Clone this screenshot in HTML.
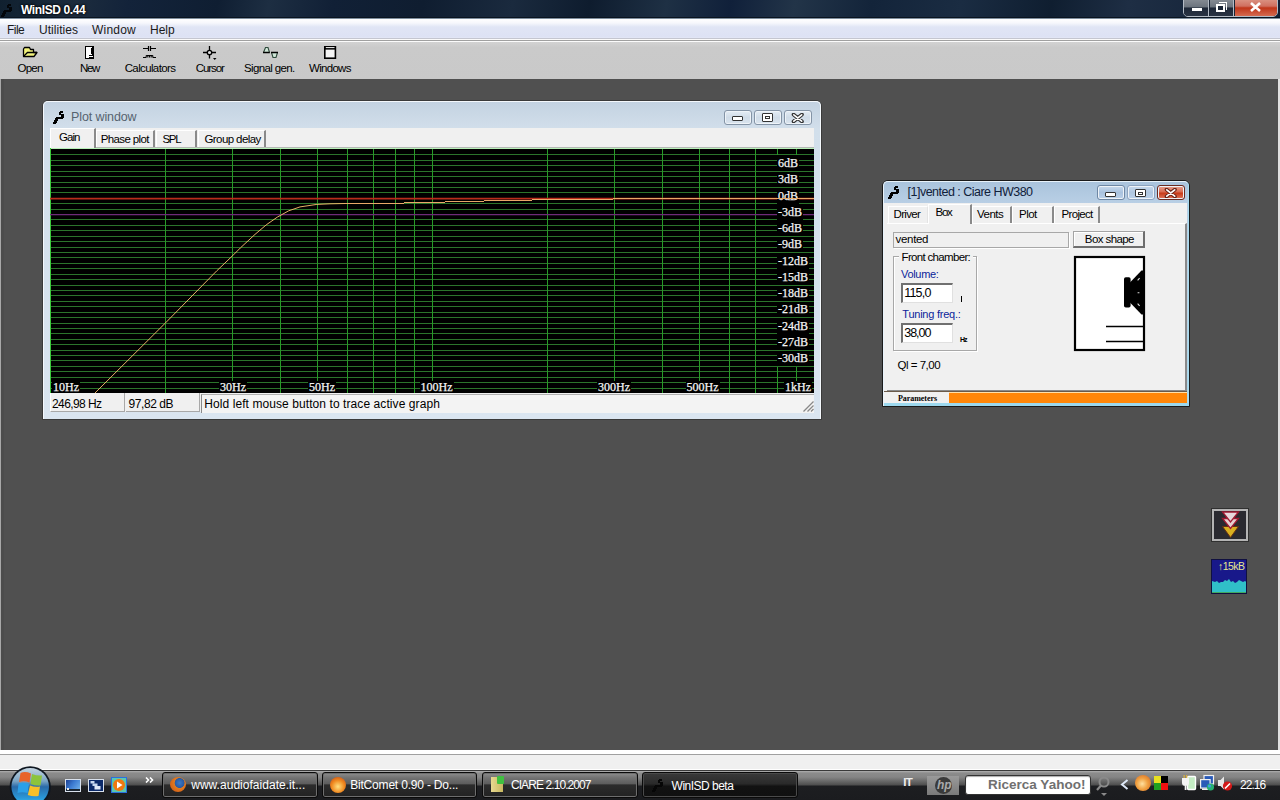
<!DOCTYPE html><html><head><meta charset="utf-8"><style>
*{box-sizing:border-box;margin:0;padding:0}
html,body{width:1280px;height:800px;overflow:hidden;background:#505050;font-family:"Liberation Sans",sans-serif;font-size:12px;color:#000}
.a{position:absolute}
.t{position:absolute;white-space:nowrap;line-height:1}
#titlebar{left:0;top:0;width:1280px;height:18px;box-shadow:inset 0 -1px 0 #0a1420;background:linear-gradient(100deg,#10202f 0%,#1c2c3e 6%,#13233a 10%,#0f1e32 17%,#1d2e42 21%,#112036 26%,#0f1d30 33%,#1a2a3e 40%,#0e1c2e 46%,#1e3044 52%,#10203a 57%,#223448 62%,#13243a 68%,#1a2c42 75%,#0f1e30 82%,#1e2e44 88%,#111f34 100%);}
#menubar{left:0;top:19px;width:1280px;height:19px;background:linear-gradient(180deg,#ffffff 0px,#f6f7fc 4px,#e0e5f5 8px,#dde2f4 18px,#e4e8f6 19px)}
#toolbar{left:0;top:42px;width:1280px;height:37px;background:linear-gradient(180deg,#d2d2d2 0%,#cacaca 15%,#c9c9c9 100%)}
#mdi{left:0;top:79px;width:1280px;height:671px;background:#505050;border-left:1px solid #a8a8a8;border-right:2px solid #e0e0e0;box-shadow:inset 3px 0 0 #4c4c4c}
#status{left:0;top:750px;width:1280px;height:20px;background:#f0f0f0;border-top:4px solid #fff;border-bottom:1px solid #fff}
#status:after{content:"";position:absolute;left:0;top:0;width:1280px;height:1px;background:#a0a0a0}
#taskbar{left:0;top:770px;width:1280px;height:30px;background:linear-gradient(180deg,#b0b0b0 0px,#8c8c8c 2px,#868686 6px,#4e4e4e 14px,#1d1e21 15px,#1b1c1f 100%);border-top:1px solid #3a3a3a}
.pl{position:absolute;font-family:"Liberation Serif",serif;font-size:12px;line-height:12px;height:14px;color:#f4f4f4;background:#000;white-space:nowrap;padding-right:1px;-webkit-text-stroke:0.25px #f4f4f4}
.win{position:absolute;border-radius:6px 6px 0 0;border:1px solid #3a3a3a}
.tab{position:absolute;background:#f0f0f0;border-top:1px solid #fff;border-left:1px solid #fff;border-right:2px solid #8a8a8a}
.cbtn{position:absolute;height:15px;width:28px;border:1px solid #8494a6;border-radius:3px;background:linear-gradient(180deg,#e4ecf4 0%,#d0dce8 50%,#dae4ee 100%);box-shadow:inset 0 0 0 1px #eef3f8}
.sp{position:absolute;height:19px;background:#f0f0f0;border-right:1px solid #a8a8a8;border-bottom:1px solid #a8a8a8}
.tbtn{position:absolute;top:772px;height:26px;border:1px solid #0a0a0a;border-radius:3px;box-shadow:inset 0 0 0 1px #6e6e6e;background:linear-gradient(180deg,#8e8e8e 0%,#727272 20%,#5e5e5e 44%,#2c2c2c 50%,#222 100%)}
</style></head><body>
<div id="titlebar" class="a"></div>
<svg class="a" style="left:1px;top:4px" width="11" height="13" viewBox="0 0 11 13" shape-rendering="crispEdges"><path d="M7 0h3v2h-3zM6 1h2v3h-2zM8 3h3v4h-3zM3 6h7v2h-7zM2 7h3v3h-3zM1 9h3v3h-3zM0 11h3v2h-3z" fill="#03060a"/></svg>
<div class="t" style="left:21.00px;top:3.84px;font-size:12px;font-weight:bold;letter-spacing:-0.39px;color:#fff;text-shadow:0 0 3px #000,0 0 2px #000">WinISD 0.44</div>
<div class="a" style="left:1183px;top:-3px;width:95px;height:20px;border:1px solid #b4bcc6;border-radius:0 0 5px 5px;background:#1a2535;overflow:hidden"><div class="a" style="left:0;top:0;width:25px;height:18px;background:linear-gradient(180deg,#8a9098 0%,#6c747e 50%,#1e2838 55%,#2a3444 100%);border-right:1px solid #b4bcc6"></div><div class="a" style="left:26px;top:0;width:24px;height:18px;background:linear-gradient(180deg,#8a9098 0%,#6c747e 50%,#1e2838 55%,#2a3444 100%);border-right:1px solid #b4bcc6"></div><div class="a" style="left:51px;top:0;width:43px;height:18px;background:linear-gradient(180deg,#dc9a8a 0%,#d07060 45%,#c0361a 55%,#d46a50 100%)"></div></div>
<div class="a" style="left:1192px;top:8px;width:10px;height:3px;background:#fff"></div>
<div class="a" style="left:1219px;top:1.5px;width:8px;height:8px;border:1.5px solid #fff;border-left:none;border-bottom:none"></div>
<div class="a" style="left:1216px;top:4px;width:9px;height:8px;border:2.5px solid #fff;background:#1a2535"></div>
<svg class="a" style="left:1249px;top:2px" width="13" height="10" viewBox="0 0 13 10"><path d="M2 1L11 9M11 1L2 9" stroke="#fff" stroke-width="2.6"/></svg>
<div id="menubar" class="a"></div>
<div class="a" style="left:0;top:18px;width:1280px;height:1px;background:#7e8e9e"></div>
<div class="a" style="left:0;top:38px;width:1280px;height:1px;background:#c4c6d0"></div>
<div class="a" style="left:0;top:39px;width:1280px;height:1px;background:#fafafa"></div>
<div class="a" style="left:0;top:40px;width:1280px;height:1px;background:#a0a0a0"></div>
<div class="a" style="left:0;top:41px;width:1280px;height:1px;background:#fbfbfb"></div>
<div class="t" style="left:7.00px;top:23.64px;font-size:12px;letter-spacing:-0.55px;color:#1a1a1a;">File</div>
<div class="t" style="left:39.00px;top:23.64px;font-size:12px;letter-spacing:0.04px;color:#1a1a1a;">Utilities</div>
<div class="t" style="left:92.00px;top:23.64px;font-size:12px;letter-spacing:0.20px;color:#1a1a1a;">Window</div>
<div class="t" style="left:150.00px;top:23.64px;font-size:12px;color:#1a1a1a;">Help</div>
<div id="toolbar" class="a"></div>
<div class="t" style="left:17.50px;top:63.07px;font-size:11.5px;letter-spacing:-0.75px;color:#000;">Open</div>
<div class="t" style="left:80.00px;top:63.07px;font-size:11.5px;letter-spacing:-1.35px;color:#000;">New</div>
<div class="t" style="left:124.70px;top:63.07px;font-size:11.5px;letter-spacing:-0.63px;color:#000;">Calculators</div>
<div class="t" style="left:195.70px;top:63.07px;font-size:11.5px;letter-spacing:-1.08px;color:#000;">Cursor</div>
<div class="t" style="left:244.00px;top:63.07px;font-size:11.5px;letter-spacing:-0.63px;color:#000;">Signal gen.</div>
<div class="t" style="left:309.00px;top:63.07px;font-size:11.5px;letter-spacing:-0.70px;color:#000;">Windows</div>
<svg class="a" style="left:0;top:40px" width="360" height="40" viewBox="0 40 360 40"><path d="M23.5 49 V56.5 H34 L37 52.5 H33.5 V49.5 H30.5 L29.5 47.5 H24.5 Z" fill="#f2f27a" stroke="#000" stroke-width="1.3" stroke-linejoin="round"/><path d="M37 52.5 H27.5 L24 56" fill="#e8f088" stroke="#000" stroke-width="1.3"/><g shape-rendering="crispEdges"><rect x="85" y="46" width="9" height="13" fill="#000"/><rect x="86" y="47" width="6" height="11" fill="#fff"/><rect x="91" y="48" width="2" height="6" fill="#000"/><rect x="89" y="55" width="4" height="1" fill="#000"/><rect x="89" y="56" width="4" height="1" fill="#fff"/><rect x="89" y="57" width="4" height="1" fill="#000"/></g><path d="M143 48.5H148.5M150.5 48.5H156M148.5 46V51M150.5 46V51" stroke="#000" stroke-width="1.2" fill="none"/><path d="M143 57.5H146.2M152.8 57.5H156M146.2 57.5V55.5M147.8 57.5V55.5M149.5 57.5V55.5M151.2 57.5V55.5M152.8 57.5V55.5M146.2 55.5H152.8" stroke="#000" stroke-width="1.1" fill="none"/><path d="M209.5 46V58.5M203 52.5H216" stroke="#000" stroke-width="1.3"/><circle cx="209.5" cy="52.5" r="2.2" fill="#ddd" stroke="#000" stroke-width="1.3"/><path d="M213 58H216.5L214.75 60Z" fill="#000"/><path d="M263.5 52.5 L265.5 47.5 H268 L269.5 52.5" fill="#cfe6d8" stroke="#2f4a3c" stroke-width="1.1"/><path d="M271.5 52.5 L273 57.5 H276 L277.5 52.5" fill="#cfe6d8" stroke="#2f4a3c" stroke-width="1.1"/><path d="M263 52.5H269.8M271 52.5H278" stroke="#000" stroke-width="1.3"/><rect x="324.8" y="46.8" width="10.6" height="11.4" fill="#f4f4f4" stroke="#000" stroke-width="1.6"/><path d="M324.8 48.8H335.4" stroke="#000" stroke-width="1.6"/><path d="M326 47.6H334.4" stroke="#fff" stroke-width="0.9"/></svg>
<div id="mdi" class="a"></div>
<div class="win" style="left:42px;top:100px;width:780px;height:320px;background:linear-gradient(180deg,#c3d2e1 0%,#d2dfeb 9%,#dae5f0 100%)"></div>
<div class="a" style="left:43px;top:101px;width:778px;height:318px;border:1px solid #f4f8fc;border-radius:5px 5px 0 0;border-bottom:none"></div>
<div class="a" style="left:50px;top:128px;width:764px;height:284px;background:#f0f0f0"></div>
<svg class="a" style="left:53px;top:111px" width="11" height="13" viewBox="0 0 11 13" shape-rendering="crispEdges"><path d="M7 0h3v2h-3zM6 1h2v3h-2zM8 3h3v4h-3zM3 6h7v2h-7zM2 7h3v3h-3zM1 9h3v3h-3zM0 11h3v2h-3z" fill="#000"/></svg>
<div class="t" style="left:71.00px;top:110.92px;font-size:12.5px;letter-spacing:-0.11px;color:#56636f;">Plot window</div>
<div class="cbtn" style="left:724px;top:110px"></div>
<div class="cbtn" style="left:754px;top:110px"></div>
<div class="cbtn" style="left:784px;top:110px"></div>
<div class="a" style="left:732px;top:116px;width:11px;height:5px;border:1.5px solid #333;background:#fff;border-radius:1px"></div>
<div class="a" style="left:762px;top:113px;width:11px;height:9px;border:1.5px solid #333;background:#fff;border-radius:1px"></div>
<div class="a" style="left:765px;top:116px;width:5px;height:3px;border:1px solid #333"></div>
<svg class="a" style="left:791px;top:113px" width="14" height="10" viewBox="0 0 14 10"><path d="M2.5 1.5L11 8.5M11 1.5L2.5 8.5" stroke="#333" stroke-width="3.6" stroke-linecap="round"/><path d="M2.8 1.8L10.7 8.2M10.7 1.8L2.8 8.2" stroke="#fff" stroke-width="1.6" stroke-linecap="round"/></svg>
<div class="a" style="left:50px;top:147px;width:764px;height:1px;background:#b4b8b4"></div>
<div class="tab" style="left:96px;top:130px;width:59px;height:17px"></div>
<div class="t" style="left:100.80px;top:134.47px;font-size:11.5px;letter-spacing:-0.63px;color:#000;">Phase plot</div>
<div class="tab" style="left:156px;top:130px;width:41px;height:17px"></div>
<div class="t" style="left:162.40px;top:134.47px;font-size:11.5px;letter-spacing:-1.27px;color:#000;">SPL</div>
<div class="tab" style="left:198px;top:130px;width:68px;height:17px"></div>
<div class="t" style="left:204.50px;top:134.47px;font-size:11.5px;letter-spacing:-0.59px;color:#000;">Group delay</div>
<div class="tab" style="left:50px;top:128px;width:46px;height:20px;border-bottom:none"></div>
<div class="t" style="left:59.00px;top:132.27px;font-size:11.5px;letter-spacing:-0.97px;color:#000;">Gain</div>
<svg style="position:absolute;left:50px;top:148px" width="764" height="245" viewBox="50 148 764 245" shape-rendering="crispEdges">
<rect x="50" y="148" width="764" height="245" fill="#000"/>
<path d="M50 154.5H814M50 160.5H814M50 165.5H814M50 171.5H814M50 176.5H814M50 182.5H814M50 187.5H814M50 192.5H814M50 198.5H814M50 203.5H814M50 209.5H814M50 214.5H814M50 219.5H814M50 225.5H814M50 230.5H814M50 236.5H814M50 241.5H814M50 247.5H814M50 252.5H814M50 257.5H814M50 263.5H814M50 268.5H814M50 274.5H814M50 279.5H814M50 285.5H814M50 290.5H814M50 295.5H814M50 301.5H814M50 306.5H814M50 312.5H814M50 317.5H814M50 323.5H814M50 328.5H814M50 333.5H814M50 339.5H814M50 344.5H814M50 350.5H814M50 355.5H814M50 360.5H814M50 366.5H814M50 371.5H814M50 377.5H814M50 382.5H814M50 388.5H814" stroke="#2b742b" stroke-width="1" fill="none"/>
<path d="M165.5 148V393M232.5 148V393M280.5 148V393M317.5 148V393M347.5 148V393M373.5 148V393M395.5 148V393M414.5 148V393M432.5 148V393M547.5 148V393M614.5 148V393M662.5 148V393M699.5 148V393M729.5 148V393M755.5 148V393M777.5 148V155M777.5 367V393M796.5 148V155M796.5 367V393" stroke="#289a28" stroke-width="1" fill="none"/>
<path d="M50 148.5H814" stroke="#b8f0b8" stroke-width="1" fill="none"/>
<path d="M50.5 148V393" stroke="#3cc83c" stroke-width="1" fill="none"/>
<path d="M50 214.6H814" stroke="#6e2a78" stroke-width="1.3" shape-rendering="auto"/>
<path d="M50 198.6H814" stroke="#b82c1c" stroke-width="1.7" shape-rendering="auto"/>
</svg>
<div class="pl" style="left:777px;top:157px;padding-left:1px">6dB</div>
<div class="pl" style="left:777px;top:173px;padding-left:1px">3dB</div>
<div class="pl" style="left:777px;top:190px;padding-left:1px">0dB</div>
<div class="pl" style="left:777px;top:206px;padding-left:1px">-3dB</div>
<div class="pl" style="left:777px;top:222px;padding-left:1px">-6dB</div>
<div class="pl" style="left:777px;top:238px;padding-left:1px">-9dB</div>
<div class="pl" style="left:777px;top:255px;padding-left:1px">-12dB</div>
<div class="pl" style="left:777px;top:271px;padding-left:1px">-15dB</div>
<div class="pl" style="left:777px;top:287px;padding-left:1px">-18dB</div>
<div class="pl" style="left:777px;top:303px;padding-left:1px">-21dB</div>
<div class="pl" style="left:777px;top:320px;padding-left:1px">-24dB</div>
<div class="pl" style="left:777px;top:336px;padding-left:1px">-27dB</div>
<div class="pl" style="left:777px;top:352px;padding-left:1px">-30dB</div>
<div class="pl" style="left:52px;top:381px;padding-left:1px;height:12px;overflow:hidden">10Hz</div>
<div class="pl" style="left:219px;top:381px;padding-left:1px;height:12px;overflow:hidden">30Hz</div>
<div class="pl" style="left:308px;top:381px;padding-left:1px;height:12px;overflow:hidden">50Hz</div>
<div class="pl" style="left:419.5px;top:381px;padding-left:1px;height:12px;overflow:hidden">100Hz</div>
<div class="pl" style="left:597px;top:381px;padding-left:1px;height:12px;overflow:hidden">300Hz</div>
<div class="pl" style="left:685.5px;top:381px;padding-left:1px;height:12px;overflow:hidden">500Hz</div>
<div class="pl" style="left:784px;top:381px;padding-left:1px;height:12px;overflow:hidden">1kHz</div>
<svg style="position:absolute;left:50px;top:148px" width="764" height="245" viewBox="50 148 764 245">
<path d="M95.0 393.0 L165.6 322.8 L216.8 270.8 L232.5 255.8 L240.4 247.9 L255.0 234.4 L266.2 224.9 L277.5 217.0 L288.7 210.8 L300.0 206.9 L316.9 204.4 L330.0 203.8 L345.0 203.5" stroke="#f2b86c" stroke-width="0.95" fill="none"/>
<path d="M345 203.5H404M404 202.5H445M445 201.5H484M484 200.5H532M532 199.5H613M613 198.5H814" stroke="#e8a868" stroke-width="1" fill="none" shape-rendering="crispEdges"/>
</svg>
<div class="a" style="left:50px;top:393px;width:764px;height:19px;background:#f0f0f0"></div>
<div class="sp" style="left:50px;top:393px;width:75px;border-left:1px solid #fff"></div>
<div class="t" style="left:52.00px;top:397.84px;font-size:12px;letter-spacing:-0.59px;color:#000;">246,98 Hz</div>
<div class="sp" style="left:126px;top:393px;width:74px"></div>
<div class="t" style="left:128.50px;top:397.84px;font-size:12px;letter-spacing:-0.43px;color:#000;">97,82 dB</div>
<div class="sp" style="left:201px;top:394px;width:613px;border-left:1px solid #8a8a8a;border-top:1px solid #b0b0b0;border-right:none;border-bottom:none;background:#f3f3f3"></div>
<div class="t" style="left:204.30px;top:397.84px;font-size:12px;letter-spacing:0.08px;color:#000;">Hold left mouse button to trace active graph</div>
<svg class="a" style="left:802px;top:400px" width="12" height="12" viewBox="0 0 12 12"><path d="M11.5 1.5L1.5 11.5M11.5 5.5L5.5 11.5M11.5 9L9 11.5" stroke="#888" stroke-width="1.3"/></svg>
<div class="win" style="left:882px;top:180px;width:308px;height:227px;background:linear-gradient(180deg,#a9c3dc 0%,#b9cfe5 10%,#bcd4e8 60%,#a6d8ee 100%);border-color:#1a1a1a"></div>
<div class="a" style="left:883px;top:181px;width:306px;height:225px;border:1px solid #e8f2fa;border-radius:5px 5px 0 0;border-bottom:none;border-right-color:#a8dcf0"></div>
<div class="a" style="left:884px;top:203px;width:303px;height:200px;background:#f0f0f0"></div>
<svg class="a" style="left:888px;top:186px" width="11" height="13" viewBox="0 0 11 13" shape-rendering="crispEdges"><path d="M7 0h3v2h-3zM6 1h2v3h-2zM8 3h3v4h-3zM3 6h7v2h-7zM2 7h3v3h-3zM1 9h3v3h-3zM0 11h3v2h-3z" fill="#000"/></svg>
<div class="t" style="left:907.60px;top:186.12px;font-size:12.5px;letter-spacing:-0.52px;color:#10203a;">[1]vented : Ciare HW380</div>
<div class="cbtn" style="left:1097px;top:185px;border-color:#6e87a4;background:linear-gradient(180deg,#c8daee 0%,#a9c2de 50%,#bcd2ea 100%)"></div>
<div class="cbtn" style="left:1127px;top:185px;border-color:#8ea4bf;background:linear-gradient(180deg,#c8daee 0%,#b0c7e0 50%,#bcd2ea 100%)"></div>
<div class="cbtn" style="left:1157px;top:185px;width:28px;border-color:#6a2a20;background:linear-gradient(180deg,#e9a493 0%,#d86a50 45%,#c83a18 55%,#e07a60 100%)"></div>
<div class="a" style="left:1105px;top:192px;width:11px;height:5px;border:1.5px solid #333;background:#fff;border-radius:1px"></div>
<div class="a" style="left:1135px;top:189px;width:11px;height:8px;border:1.5px solid #333;background:#fff;border-radius:1px"></div>
<div class="a" style="left:1138px;top:191.5px;width:5px;height:3px;border:1px solid #333"></div>
<svg class="a" style="left:1164px;top:187.5px" width="14" height="10" viewBox="0 0 14 10"><path d="M2.5 1.5L11 8.5M11 1.5L2.5 8.5" stroke="#6a2418" stroke-width="3.6" stroke-linecap="round"/><path d="M2.8 1.8L10.7 8.2M10.7 1.8L2.8 8.2" stroke="#fff" stroke-width="1.7" stroke-linecap="round"/></svg>
<div class="a" style="left:887px;top:223px;width:300px;height:168px;border-top:1px solid #fff;border-right:2px solid #8a8a8a;border-bottom:1px solid #8a8a8a"></div>
<div class="tab" style="left:888px;top:206px;width:40px;height:17px;border-right:1px solid #e4e4e4"></div>
<div class="t" style="left:893.50px;top:209.07px;font-size:11.5px;letter-spacing:-0.67px;color:#000;">Driver</div>
<div class="tab" style="left:972px;top:206px;width:40px;height:17px"></div>
<div class="t" style="left:977.00px;top:209.07px;font-size:11.5px;letter-spacing:-0.51px;color:#000;">Vents</div>
<div class="tab" style="left:1012px;top:206px;width:42px;height:17px"></div>
<div class="t" style="left:1019.00px;top:209.07px;font-size:11.5px;letter-spacing:-0.54px;color:#000;">Plot</div>
<div class="tab" style="left:1054px;top:206px;width:46px;height:17px"></div>
<div class="t" style="left:1061.60px;top:209.07px;font-size:11.5px;letter-spacing:-0.70px;color:#000;">Project</div>
<div class="tab" style="left:928px;top:204px;width:44px;height:20px;border-bottom:none"></div>
<div class="t" style="left:935.60px;top:206.87px;font-size:11.5px;letter-spacing:-1.28px;color:#000;">Box</div>
<div class="a" style="left:893px;top:231.5px;width:176px;height:16px;background:#f0f0f0;border:1px solid #a8a8a8;box-shadow:1px 1px 0 #fff"></div>
<div class="t" style="left:895.60px;top:234.07px;font-size:11.5px;letter-spacing:-0.33px;color:#000;">vented</div>
<div class="a" style="left:1073px;top:231px;width:72px;height:17px;background:#f0f0f0;border:1px solid #a4a4a4;border-right:2px solid #6e6e6e;border-bottom:2px solid #6e6e6e;box-shadow:inset 1px 1px 0 #fff"></div>
<div class="t" style="left:1084.80px;top:234.27px;font-size:11.5px;letter-spacing:-0.58px;color:#000;">Box shape</div>
<div class="a" style="left:893px;top:256px;width:84px;height:95px;border:1px solid #a8a8a8;box-shadow:inset 1px 1px 0 #fff,1px 1px 0 #fff"></div>
<div class="a" style="left:899px;top:252px;width:74px;height:10px;background:#f0f0f0"></div>
<div class="t" style="left:901.60px;top:252.17px;font-size:11.5px;letter-spacing:-0.68px;color:#000;">Front chamber:</div>
<div class="t" style="left:901.00px;top:268.69px;font-size:11px;letter-spacing:-0.31px;color:#0c249a;">Volume:</div>
<div class="a" style="left:901px;top:283px;width:52px;height:20px;background:#fff;border:2px solid #707070;border-right:1px solid #e0e0e0;border-bottom:1px solid #e0e0e0"></div>
<div class="t" style="left:904.20px;top:286.72px;font-size:12.5px;letter-spacing:-0.78px;color:#000;">115,0</div>
<div class="a" style="left:960.5px;top:296px;width:1.4px;height:6px;background:#000"></div>
<div class="t" style="left:902.30px;top:308.89px;font-size:11px;letter-spacing:-0.23px;color:#0c249a;">Tuning freq.:</div>
<div class="a" style="left:901px;top:323px;width:52px;height:20px;background:#fff;border:2px solid #707070;border-right:1px solid #e0e0e0;border-bottom:1px solid #e0e0e0"></div>
<div class="t" style="left:904.20px;top:326.62px;font-size:12.5px;letter-spacing:-1.01px;color:#000;">38,00</div>
<div class="t" style="left:960.00px;top:335.57px;font-size:7px;font-weight:bold;letter-spacing:-1.06px;color:#000;">Hz</div>
<div class="t" style="left:897.50px;top:359.97px;font-size:11.5px;letter-spacing:-0.49px;color:#000;">Ql = 7,00</div>
<svg class="a" style="left:1073px;top:255px" width="74" height="97" viewBox="0 0 74 97"><rect x="2" y="2" width="69" height="93" fill="#fff" stroke="#000" stroke-width="2.2"/><path d="M33 71.5H71M33 86.5H71" stroke="#000" stroke-width="1.6"/><rect x="51" y="22.2" width="6.6" height="30.4" rx="1.8" fill="#000"/><path d="M56 28.5 L68.5 15.5 H71 V59.5 H68.5 L56 46.5Z" fill="#000"/><path d="M64.6 25.4L66.6 23.2M64.6 37.8H66.4M64.6 48.6L66.6 50.8" stroke="#ddd" stroke-width="1.1"/></svg>
<div class="a" style="left:884px;top:391px;width:303px;height:12px;background:#f0f0f0;border-top:1px solid #6a5a4a"></div>
<div class="a" style="left:949px;top:392px;width:238px;height:11px;background:#ff8608;border-top:1px solid #ffe0a8"></div>
<div class="t" style="left:898.00px;top:394.80px;font-size:8px;font-family:'Liberation Serif',sans-serif;font-weight:bold;letter-spacing:-0.05px;color:#000;">Parameters</div>
<div class="a" style="left:884px;top:403px;width:305px;height:3px;background:#9cd8ee"></div>
<div class="a" style="left:1211px;top:508px;width:38px;height:34px;border:1px solid #303030;box-shadow:inset 0 0 0 2px #b4b4b4;background:#2a2a30"></div>
<svg class="a" style="left:1208px;top:505px" width="44" height="40" viewBox="1208 505 44 40"><path d="M1222.5 526.5 L1238.5 526.5 L1230.5 537.5 Z" fill="#d8b020" stroke="#6a3010" stroke-width="1"/><path d="M1222.5 518.5 L1238.5 518.5 L1230.5 528.5 Z" fill="#e4d0d0" stroke="#a01830" stroke-width="1.3"/><path d="M1222.5 512 L1238.5 512 L1230.5 522 Z" fill="#e8d8dc" stroke="#a01830" stroke-width="1.3"/></svg>
<div class="a" style="left:1211px;top:559px;width:36px;height:35px;background:#18188a;border:1px solid #101040;overflow:hidden"><svg class="a" style="left:0;top:0" width="36" height="35" viewBox="0 0 36 35"><path d="M0 21L3 22L5 21L7 23L9 22L11 22L13 20L15 21L17 19L19 22L21 21L23 23L25 22L27 20L29 21L31 22L33 21L36 23V35H0Z" fill="#30c0c8"/><path d="M0 32H36V35H0Z" fill="#40a860"/></svg></div>
<div class="t" style="left:1218.00px;top:561.11px;font-size:10.5px;letter-spacing:-0.54px;color:#e8e890;">↑15kB</div>
<div id="status" class="a"></div>
<div id="taskbar" class="a"></div>
<div class="tbtn" style="left:162px;width:156px"></div>
<div class="tbtn" style="left:322px;width:155px"></div>
<div class="tbtn" style="left:482px;width:156px"></div>
<div class="tbtn" style="left:642px;width:156px;background:linear-gradient(180deg,#3a3a3a 0%,#2a2a2a 45%,#121212 55%,#101010 100%);box-shadow:inset 0 0 0 1px #4a4a4a"></div>
<div class="t" style="left:191.20px;top:778.84px;font-size:12px;letter-spacing:0.03px;color:#fff;">www.audiofaidate.it...</div>
<div class="t" style="left:350.20px;top:778.84px;font-size:12px;letter-spacing:-0.19px;color:#fff;">BitComet 0.90 - Do...</div>
<div class="t" style="left:510.90px;top:778.84px;font-size:12px;letter-spacing:-0.91px;color:#fff;">CIARE 2.10.2007</div>
<div class="t" style="left:671.60px;top:779.84px;font-size:12px;letter-spacing:-0.51px;color:#fff;">WinISD beta</div>
<div class="t" style="left:1240.00px;top:778.94px;font-size:12px;letter-spacing:-0.96px;color:#fff;">22.16</div>
<div class="t" style="left:903.20px;top:776.87px;font-size:11.5px;font-weight:bold;letter-spacing:-0.70px;color:#eee;transform:scaleY(1.0)">IT</div>
<svg class="a" style="left:8px;top:764px" width="46" height="46" viewBox="8 764 46 46"><defs><linearGradient id="og" x1="0" y1="0" x2="0" y2="1"><stop offset="0" stop-color="#c4d4e0"/><stop offset="0.35" stop-color="#7aa4c4"/><stop offset="0.5" stop-color="#2a6aa8"/><stop offset="0.8" stop-color="#2a98d8"/><stop offset="1" stop-color="#40c8f8"/></linearGradient></defs><circle cx="30.2" cy="786.8" r="20.6" fill="#0e1620"/><circle cx="30.2" cy="786.8" r="18.8" fill="url(#og)"/><path d="M20.5 773 Q25 771 31 773.5 L29.5 782.5 Q24.5 780.5 19 782Z" fill="#e8642a"/><path d="M32 774 Q37 776 42 775.5 L40.5 785.5 Q35.5 786 30.5 784Z" fill="#8cc43c"/><path d="M18.5 783.5 Q23.5 782 29 784 L27.5 793 Q22 791.5 17.5 793Z" fill="#2aa0e8"/><path d="M30 785.5 Q35 787.5 40 786.5 L38.5 796 Q33 797 27.8 795Z" fill="#f8c028"/></svg>
<svg class="a" style="left:62px;top:774px" width="68" height="22" viewBox="62 774 68 22"><defs><linearGradient id="q1" x1="0" y1="0" x2="1" y2="0.6"><stop offset="0" stop-color="#1a3a8a"/><stop offset="0.5" stop-color="#3a78d0"/><stop offset="1" stop-color="#6aaae8"/></linearGradient></defs><rect x="65.5" y="779.5" width="15" height="12" fill="url(#q1)" stroke="#d8e0ec" stroke-width="1"/><rect x="66" y="789" width="14" height="2" fill="#1a2430"/><rect x="67" y="788" width="2" height="2" fill="#e8e8e8"/><rect x="88.5" y="779.5" width="15" height="12" fill="#0c2a6a" stroke="#d8e0ec" stroke-width="1"/><rect x="90.5" y="781" width="4" height="2.5" fill="#c8d8f0"/><rect x="92.5" y="783.5" width="5" height="2.5" fill="#c8d8f0"/><rect x="94.5" y="786" width="6" height="3.5" fill="#e0e8f8"/><rect x="111.5" y="777.5" width="15" height="15" fill="#5ac8b0" stroke="#2a70e0" stroke-width="1"/><circle cx="119" cy="785" r="6" fill="#f07810"/><path d="M117 781.5L122.5 785L117 788.5Z" fill="#fff"/></svg>
<svg class="a" style="left:145px;top:777px" width="9" height="6" viewBox="0 0 9 6"><path d="M1 0.5L3.5 3L1 5.5M5 0.5L7.5 3L5 5.5" stroke="#fff" stroke-width="1.6" fill="none"/></svg>
<div class="a" style="left:170px;top:777px;width:16px;height:15px;border-radius:50%;background:radial-gradient(circle at 60% 40%,#3a7ac8 0%,#2a5aa0 35%,#e07a20 40%,#c85010 100%)"></div>
<div class="a" style="left:330px;top:777px;width:16px;height:16px;border-radius:50%;background:radial-gradient(circle at 50% 60%,#ffe080 0%,#f08a20 50%,#c04010 100%)"></div>
<div class="a" style="left:491px;top:777px;width:12px;height:15px;background:linear-gradient(90deg,#e8d890,#c8b860)"></div>
<div class="a" style="left:497px;top:776px;width:7px;height:8px;background:#40c040;border-radius:1px"></div>
<svg class="a" style="left:652px;top:779px" width="11" height="13" viewBox="0 0 11 13" shape-rendering="crispEdges"><path d="M7 0h3v2h-3zM6 1h2v3h-2zM8 3h3v4h-3zM3 6h7v2h-7zM2 7h3v3h-3zM1 9h3v3h-3zM0 11h3v2h-3z" fill="#060606"/></svg>
<div class="a" style="left:927px;top:776px;width:32px;height:19px;background:linear-gradient(180deg,#9a9a9a 0%,#8a8a8a 50%,#7a7a7a 100%)"></div>
<div class="a" style="left:935px;top:777px;width:17px;height:17px;border-radius:50%;background:#3a3a3a"></div>
<div class="t" style="left:937.00px;top:778.84px;font-size:12px;font-weight:bold;color:#aaa;font-style:italic">hp</div>
<div class="a" style="left:965px;top:775px;width:126px;height:20px;background:#fff;border:1px solid #333;border-radius:3px;box-shadow:inset 0 1px 1px #aaa"></div>
<div class="t" style="left:988.00px;top:777.87px;font-size:13.5px;font-weight:bold;letter-spacing:0.01px;color:#707070;">Ricerca Yahoo!</div>
<svg class="a" style="left:1095px;top:775px" width="16" height="22" viewBox="0 0 16 22"><circle cx="9" cy="7" r="4.5" stroke="#8a8a8a" stroke-width="2" fill="none"/><path d="M6 10.5L2 15" stroke="#8a8a8a" stroke-width="2.2"/><path d="M6 18H12L9 21Z" fill="#8a8a8a"/></svg>
<svg class="a" style="left:1120px;top:779px" width="9" height="11" viewBox="0 0 9 11"><path d="M7.5 1L2 5.5L7.5 10" stroke="#dde8f8" stroke-width="2" fill="none"/></svg>
<div class="a" style="left:1135px;top:775px;width:16px;height:16px;border-radius:50%;background:radial-gradient(circle at 45% 55%,#ffe0a0 0%,#f0a040 45%,#d06020 100%)"></div>
<div class="a" style="left:1154px;top:776px;width:7px;height:7px;background:#e8e020"></div><div class="a" style="left:1161px;top:776px;width:7px;height:7px;background:#000"></div><div class="a" style="left:1154px;top:783px;width:7px;height:7px;background:#20a020"></div><div class="a" style="left:1161px;top:783px;width:7px;height:7px;background:#f01010"></div>
<svg class="a" style="left:1180px;top:772px" width="56" height="22" viewBox="1180 772 56 22"><rect x="1187.5" y="776.5" width="8" height="13" rx="1" fill="#c4ecc4" stroke="#fff" stroke-width="1.4"/><rect x="1183.5" y="775" width="1.3" height="3" fill="#d8b040"/><rect x="1186" y="775" width="1.3" height="3" fill="#d8b040"/><path d="M1182 778H1189V783Q1189 786 1185.5 786Q1182 786 1182 783Z" fill="#f4f4f4"/><rect x="1184.7" y="786" width="1.8" height="4" fill="#f4f4f4"/><rect x="1204" y="775.5" width="9.5" height="8.5" fill="#2a5ab8" stroke="#f0f0f0" stroke-width="1.2"/><rect x="1200.6" y="779.6" width="9.5" height="8.5" fill="#2a5ab8" stroke="#f0f0f0" stroke-width="1.2"/><rect x="1202" y="788.5" width="6" height="1.5" fill="#f0f0f0"/><circle cx="1210.5" cy="787" r="3.6" fill="#28b070"/><circle cx="1209.5" cy="786" r="1.6" fill="#3aa0e8"/><path d="M1218 780H1220.5L1224 776.5V789.5L1220.5 786H1218Z" fill="#e6e6e6"/><circle cx="1227.5" cy="786" r="4.6" fill="#d41818"/><path d="M1225 788.5L1230 783.5" stroke="#fff" stroke-width="1.6"/></svg>
</body></html>
